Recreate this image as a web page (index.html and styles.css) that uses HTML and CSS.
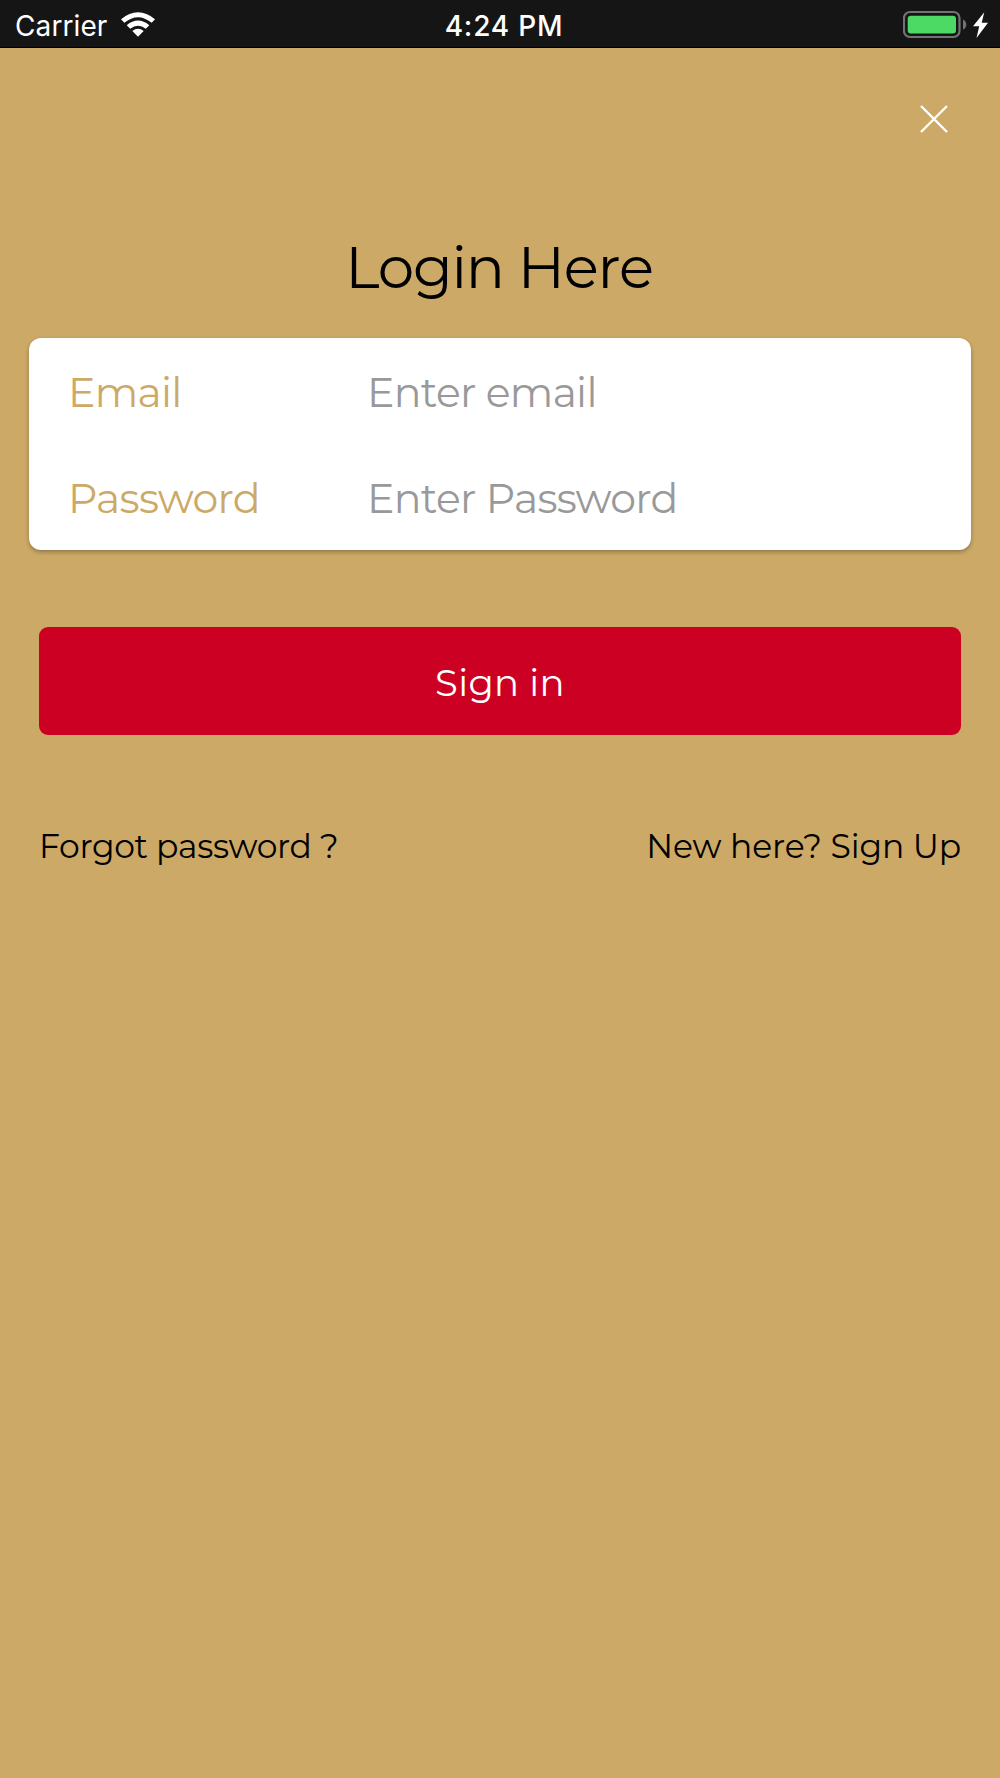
FILE: index.html
```html
<!DOCTYPE html>
<html lang="en">

<head>
    <meta charset="UTF-8">
    <meta name="viewport" content="width=device-width, initial-scale=1.0">
    <title>Login</title>
    <link rel="stylesheet" href="styles.css">
</head>

<body>
    <div class="status-bar">
        <div class="status-left">
            <span class="carrier">Carrier</span>
            <svg class="wifi" width="34" height="25" viewBox="0 0 34 25">
                <path d="M0 7.2Q17-6.7 34 7.2L30.7 10.8Q17-0.5 3.3 10.8Z" />
                <path d="M5.7 13.2Q17 4 28.3 13.2L24.8 16.8Q17 10.7 9.2 16.8Z" />
                <path d="M11.3 19.1Q17 14.5 22.7 19.1L17 24.7Z" />
            </svg>
        </div>
        <div class="time">4:24 PM</div>
        <div class="status-right">
            <svg width="86" height="30" viewBox="0 0 86 30">
                <rect x="1" y="2" width="55.5" height="25" rx="6" fill="#151515" stroke="#737375" stroke-width="2.2" />
                <rect x="4.7" y="5.7" width="48.3" height="17.8" rx="3.2" fill="#4cd964" />
                <path d="M60 9.5Q63.3 11.3 63.3 14.7Q63.3 18 60 19.7Z" fill="#737375" />
                <path d="M81.3 2.3L70 16.3H76.2L73.5 28L85 12.8H78.7Z" fill="#fff" />
            </svg>
        </div>
    </div>

    <div class="container">
        <button class="close-button" aria-label="Close">
            <svg width="28" height="28" viewBox="0 0 28 28">
                <path d="M1 1L27 27M27 1L1 27" />
            </svg>
        </button>

        <h1>Login Here</h1>

        <div class="card">
            <div class="field">
                <label for="email">Email</label>
                <input id="email" type="email" placeholder="Enter email">
            </div>
            <div class="field">
                <label for="password">Password</label>
                <input id="password" type="password" placeholder="Enter Password">
            </div>
        </div>

        <button class="submit-button">Sign in</button>

        <div class="links">
            <a class="forgot" href="#">Forgot password ?</a>
            <a class="signup" href="#">New here? Sign Up</a>
        </div>
    </div>
</body>

</html>
```
FILE: styles.css
```css
* {
    box-sizing: border-box;
}

body {
    margin: 0;
    min-height: 1778px;
    background-color: #cca966;
    font-family: Montserrat, Inter, sans-serif;
    font-weight: 400;
    color: #000;
}

.status-bar {
    display: grid;
    grid-template-columns: 1fr auto 1fr;
    align-items: center;
    height: 48px;
    padding: 3px 11px 0 15px;
    background-color: #151515;
    border-bottom: 1px solid #000;
    color: #fff;
    font-family: Inter, sans-serif;
    font-size: 28px;
}

.status-left {
    display: flex;
    align-items: center;
    gap: 14px;
}

.carrier {
    font-weight: 400;
    letter-spacing: 0.1px;
    padding-top: 1px;
}

.wifi {
    fill: #fff;
    margin-top: -2px;
}

.time {
    font-weight: 500;
    letter-spacing: 0.8px;
    padding-top: 1px;
    padding-left: 4px;
}

.status-right {
    display: flex;
    justify-content: flex-end;
}

.container {
    display: flex;
    flex-direction: column;
}

.close-button {
    align-self: flex-end;
    display: flex;
    margin: 57px 52px 0 0;
    padding: 0;
    background: none;
    border: none;
    cursor: pointer;
}

.close-button svg {
    fill: none;
    stroke: #fff;
    stroke-width: 2.4;
}

h1 {
    margin: 100px 0 0;
    padding-right: 2px;
    font-size: 58px;
    font-weight: 400;
    line-height: 70px;
    text-align: center;
    letter-spacing: -1.2px;
}

.card {
    margin: 35px 29px 0;
    height: 212px;
    padding: 1px 38px 0 39px;
    background-color: #fff;
    border-radius: 12px;
    box-shadow: 0 2px 4px rgba(0, 0, 0, 0.3);
}

.field {
    display: flex;
    align-items: center;
    height: 106px;
    font-size: 41px;
    letter-spacing: -0.7px;
}

label {
    width: 299px;
    color: #cca966;
}

input {
    flex: 1;
    min-width: 0;
    padding: 0;
    border: none;
    outline: none;
    background: none;
    font: inherit;
    letter-spacing: inherit;
}

input::placeholder {
    color: #999;
}

.submit-button {
    margin: 77px 39px 0;
    height: 108px;
    padding: 2px 0 0;
    background-color: #cc0022;
    border: none;
    border-radius: 9px;
    color: #fff;
    font: inherit;
    font-size: 37px;
    letter-spacing: 0.3px;
    cursor: pointer;
}

.links {
    display: flex;
    justify-content: space-between;
    margin: 91px 39px 0;
    font-size: 33px;
    line-height: 40px;
}

.links a {
    color: #000;
    text-decoration: none;
}

.forgot {
    letter-spacing: -0.3px;
}

.signup {
    letter-spacing: -0.1px;
}
```
